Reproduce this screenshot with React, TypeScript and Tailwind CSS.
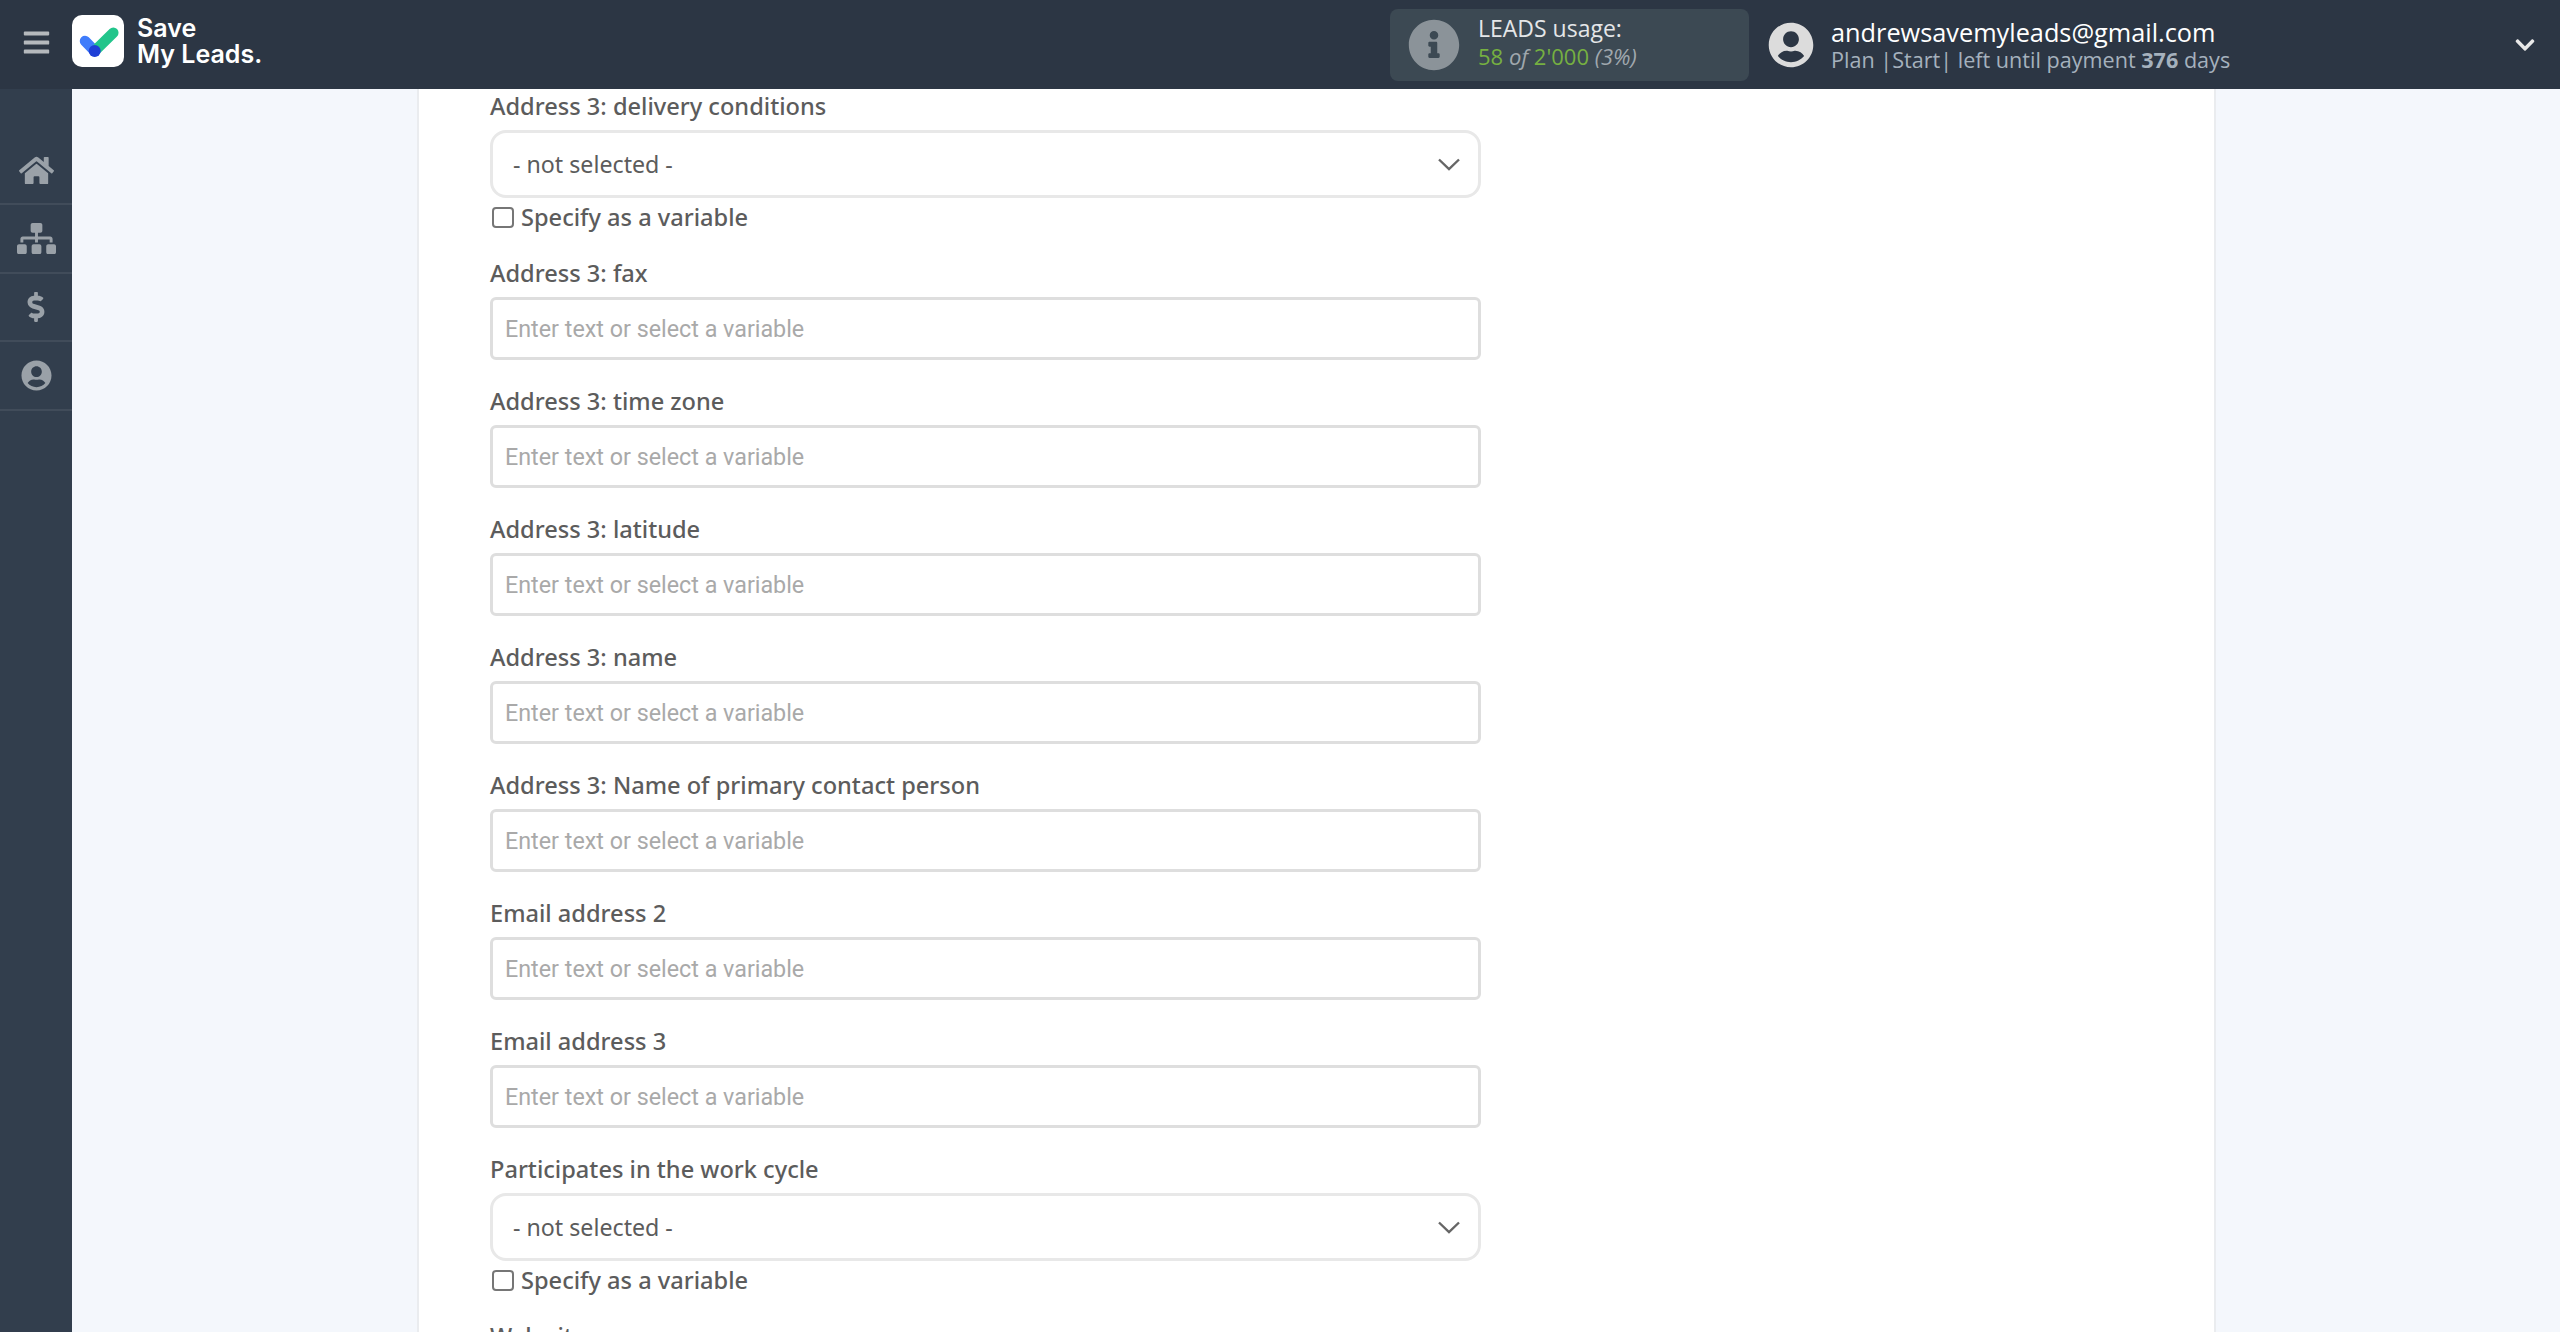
import { FaBars, FaChevronDown, FaDollarSign, FaHome, FaInfoCircle, FaSitemap, FaUserCircle } from "react-icons/fa";

const labelText = "font-['Noto_Sans',sans-serif] text-[23.6px] leading-8 text-[#5c5c5c] font-medium";

function SelectField({ label }: { label: string }) {
    return (
        <div>
            <div className={`h-8 ${labelText}`}>{label}</div>
            <div className="mt-2 flex h-[68px] items-center justify-between rounded-[16px] border-[3px] border-[#e8e8e8] bg-white pl-[20px] pr-[18px] font-['Noto_Sans',sans-serif] text-[23.2px] text-[#5c5c5c]">
                <span>- not selected -</span>
                <svg width="22" height="13" viewBox="0 0 22 13" fill="none" stroke="#666" strokeWidth="2.4">
                    <path d="M1 1.5 L11 11 L21 1.5" />
                </svg>
            </div>
            <label className={`mt-[3px] flex h-8 items-center ${labelText}`}>
                <span className="ml-[2px] mr-[7px] h-[21px] w-[22px] rounded-[4px] border-2 border-[#767676] bg-white" />
                Specify as a variable
            </label>
        </div>
    );
}

function InputField({ label }: { label: string }) {
    return (
        <div className="pb-px">
            <div className={`h-8 ${labelText}`}>{label}</div>
            <input
                className="mt-[8px] block h-[63px] w-full rounded-[6px] border-[3px] border-[#dedede] bg-white px-3 font-['Roboto',sans-serif] text-[23.3px] placeholder:text-[#a9a9a9]"
                placeholder="Enter text or select a variable"
            />
        </div>
    );
}

const menu = [
    { Icon: FaHome, size: 35 },
    { Icon: FaSitemap, size: 39 },
    { Icon: FaDollarSign, size: 30 },
    { Icon: FaUserCircle, size: 31 },
];

export default function App() {
    return (
        <div className="flex h-[1332px] flex-col overflow-hidden bg-[#f4f7fc] font-['Open_Sans',sans-serif]">
            <header className="flex h-[89px] shrink-0 items-center bg-[#2c3644]">
                <div className="flex w-[72px] justify-center pb-[5px]">
                    <FaBars className="text-[#b5b9bd]" size={29} />
                </div>
                <div className="-mt-[7px] h-[52px] w-[52px] rounded-[10px] bg-white">
                    {/* logo mark */}
                    <svg width="52" height="52" viewBox="0 0 52 52" fill="none" strokeLinecap="round" strokeWidth="10.5">
                        <path d="M13 26 L22.7 36" stroke="#3f7cfb" />
                        <path d="M22.7 36 L41.3 17.7" stroke="#22c58b" />
                        <circle cx="22.7" cy="36" r="6" fill="#1f3fd6" />
                    </svg>
                </div>
                <div className="-mt-[8px] ml-[13px] font-['Inter',sans-serif] text-[25px] font-semibold leading-[26px] text-white">
                    <div>Save</div>
                    <div>My Leads.</div>
                </div>
                <div className="ml-auto flex h-[72px] w-[359px] items-center rounded-[8px] bg-[#3c4953] pl-[18px]">
                    <FaInfoCircle className="text-[#8b9399]" size={52} />
                    <div className="ml-[18px] -mt-[6px]">
                        <div className="text-[23px] leading-[28px] text-[#e4e6e8]">LEADS usage:</div>
                        <div className="text-[22px] leading-[28px] text-[#76b041]">
                            58 <i className="text-[#a0a8ae]">of</i> 2'000 <i className="text-[#a0a8ae]">(3%)</i>
                        </div>
                    </div>
                </div>
                <FaUserCircle className="ml-[19px] text-[#dcdcdc]" size={46} />
                <div className="ml-[17px] w-[683px]">
                    <div className="text-[25.3px] leading-[30px] text-white">andrewsavemyleads@gmail.com</div>
                    <div className="text-[21.6px] leading-[26px] text-[#a5b1bd]">
                        Plan |Start| left until payment <b>376</b> days
                    </div>
                </div>
                <FaChevronDown className="mr-[24px] text-[#e8e8e8]" size={22} />
            </header>
            <div className="flex min-h-0 flex-1">
                <nav className="w-[72px] shrink-0 bg-[#323e4d] pt-[48px]">
                    {menu.map(({ Icon, size }, i) => (
                        <div key={i} className="flex h-[68.4px] items-center justify-center border-b-2 border-[#414c5a]">
                            <Icon className="text-[#9aa1a8]" size={size} />
                        </div>
                    ))}
                </nav>
                <main className="min-w-0 flex-1 pl-[345px]">
                    <div className="h-full w-[1799px] border-x-2 border-[#eaecef] bg-white pl-[71px] pt-px">
                        <div className="flex w-[991px] flex-col gap-6">
                            <SelectField label="Address 3: delivery conditions" />
                            <InputField label="Address 3: fax" />
                            <InputField label="Address 3: time zone" />
                            <InputField label="Address 3: latitude" />
                            <InputField label="Address 3: name" />
                            <InputField label="Address 3: Name of primary contact person" />
                            <InputField label="Email address 2" />
                            <InputField label="Email address 3" />
                            <SelectField label="Participates in the work cycle" />
                            <div className={`h-8 ${labelText}`}>Web site</div>
                        </div>
                    </div>
                </main>
            </div>
        </div>
    );
}
